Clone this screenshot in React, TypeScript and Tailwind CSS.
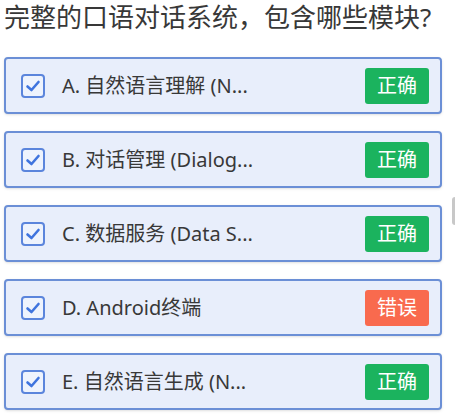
import React from 'react'

// answer review list
const options = [
  { id: 'A', label: 'A. 自然语言理解 (N...', ok: true },
  { id: 'B', label: 'B. 对话管理 (Dialog...', ok: true },
  { id: 'C', label: 'C. 数据服务 (Data S...', ok: true },
  { id: 'D', label: 'D. Android终端', ok: false },
  { id: 'E', label: 'E. 自然语言生成 (N...', ok: true },
]

function CheckBox() {
  return (
    <div className="w-[24px] h-[24px] rounded-[4px] border-[2.5px] border-[#5b85dc] bg-[#eef3fd] flex items-center justify-center shrink-0">
      <svg width="16" height="16" viewBox="0 0 16 16" fill="none">
        <path d="M2.5 8.5 L6.5 12 L13.5 4" stroke="#3f74de" strokeWidth="2.6" strokeLinecap="round" strokeLinejoin="round" />
      </svg>
    </div>
  )
}

export default function App() {
  return (
    <div
      className="relative w-[455px] h-[418px] bg-white overflow-hidden text-[#383838]"
      style={{ fontFamily: '"Noto Sans", "Noto Sans CJK SC", sans-serif' }}
    >
      <div className="pl-[4px] h-[34px] leading-[34px] text-[26px] whitespace-nowrap">
        完整的口语对话系统，包含哪些模块?
      </div>

      <div className="mt-[23px] ml-[4px] w-[438px] flex flex-col gap-[17px]">
        {options.map(opt => (
          <div
            key={opt.id}
            className="h-[57px] flex items-center pl-[15px] pr-[11px] rounded-[4px] border-2 border-[#6b8fd6] bg-[#e8eefb] shadow-sm"
          >
            <CheckBox />
            <span className="ml-[17px] flex-1 text-[20px] whitespace-nowrap">{opt.label}</span>
            <span
              className={`w-[64px] h-[36px] rounded-[3px] flex items-center justify-center text-white text-[20px] ${
                opt.ok ? 'bg-[#1bb35e]' : 'bg-[#f96a4e]'
              }`}
            >
              {opt.ok ? '正确' : '错误'}
            </span>
          </div>
        ))}
      </div>

      {/* scrollbar sliver */}
      <div className="absolute right-0 top-[197px] w-[3px] h-[28px] bg-[#c8c8c8] rounded-l-sm" />
    </div>
  )
}
